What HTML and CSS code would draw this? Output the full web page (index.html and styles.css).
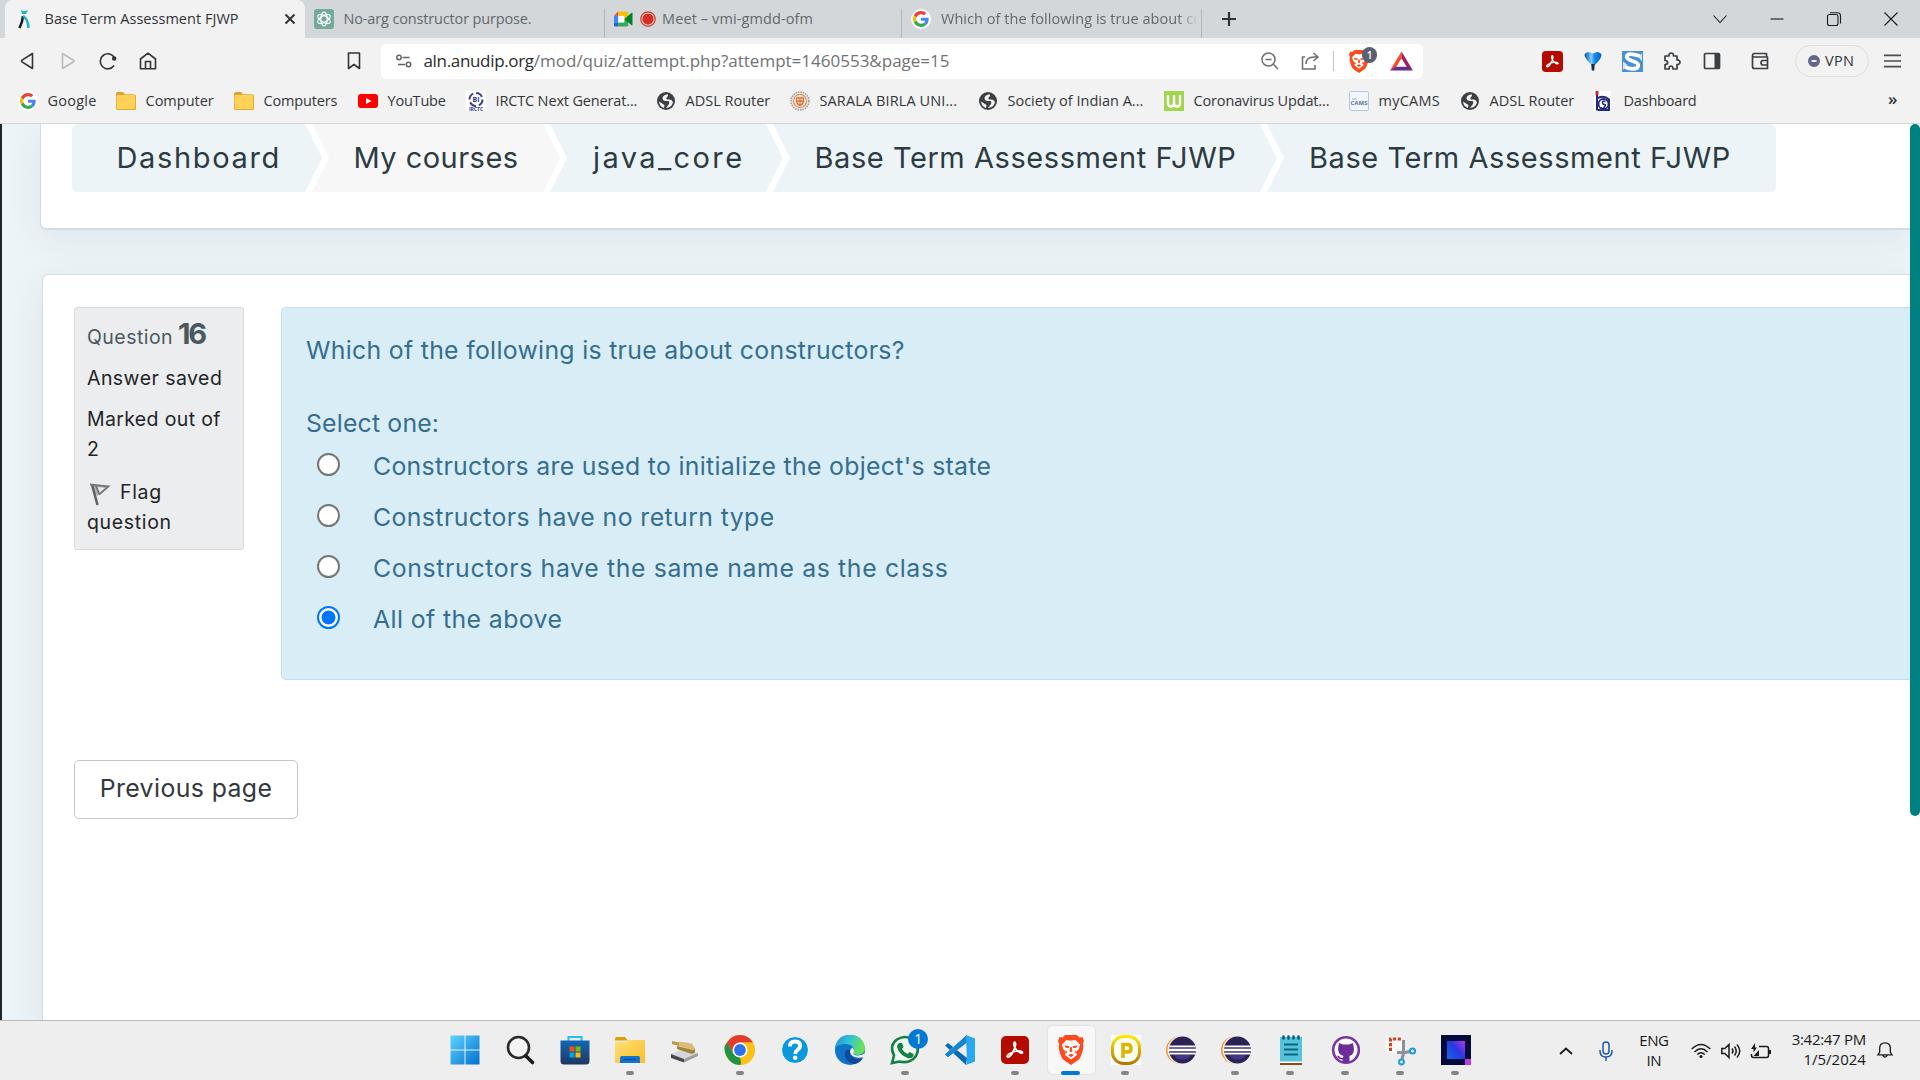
FILE: index.html
```html
<!DOCTYPE html>
<html lang="en">
<head>
<meta charset="utf-8">
<title>Base Term Assessment FJWP</title>
<link rel="stylesheet" href="styles.css">
</head>
<body>
<svg class="defs" aria-hidden="true">
  <symbol id="google" viewBox="0 0 48 48">
    <path fill="#ea4335" d="M24 9.5c3.5 0 6.700 1.200 9.200 3.600l6.900-6.900C35.900 2.400 30.500 0 24 0 14.600 0 6.500 5.400 2.600 13.200l8 6.200C12.400 13.700 17.700 9.500 24 9.500z"/>
    <path fill="#4285f4" d="M47 24.600c0-1.600-.2-3.100-.4-4.600H24v9h12.900c-.6 3-2.200 5.500-4.700 7.200l7.700 6C44.400 38 47 31.800 47 24.600z"/>
    <path fill="#fbbc05" d="M10.500 28.600A14.500 14.500 0 0 1 10.500 19.400l-8-6.200a24 24 0 0 0 0 21.600z"/>
    <path fill="#34a853" d="M24 48c6.500 0 12-2.100 15.900-5.800l-7.700-6c-2.200 1.500-4.900 2.300-8.200 2.300-6.300 0-11.600-4.200-13.500-9.900l-8 6.200C6.500 42.600 14.600 48 24 48z"/>
  </symbol>
  <symbol id="folder" viewBox="0 0 20 18">
    <path fill="#d9a32e" d="M0 2Q0 0 2 0h5l2 2.500h8V6H0z"/><rect y="2.500" width="20" height="15.500" rx="1.500" fill="#e0ab33"/><rect x=".7" y="3" width="18.300" height="14" rx="1" fill="#ffd257"/>
  </symbol>
  <symbol id="globe" viewBox="0 0 18 18">
    <circle cx="9" cy="9" r="9" fill="#3c4043"/><path fill="#f2f2f2" d="M9.500 2.500Q6 3 5.500 6q0 3 3.500 3h2.500q1.500 1 .5 3l-3 4q5.500-.5 7-5.500-1-3-3.500-3H10q-1.500-1 0-2.500 1.500-1 1-2.500zM2 9.500q.5 5 5 6.500L7.500 13z"/>
  </symbol>
  <symbol id="lion" viewBox="0 0 26 30">
    <path fill="#fb4b1f" d="M7 0h12l2.500 2.500L24.500 2 26 6l-1 3 .3 4c-1 5-2.300 8.500-4.300 11.500L13 30 5 24.500C3 21.500 1.700 18 .7 13L1 9 0 6l1.500-4 3 .5z"/>
    <path fill="#fff" d="M8.500 5l4.500.8 4.500-.8L22 9.500l-1.200 4.500-2.800 3 1 3-6 4.500L7 20l1-3-2.800-3L4 9.500z"/>
    <path fill="#fb4b1f" d="M6.500 10.300l5 .9-.6 1.800-3.400-.2zM19.500 10.300l-5 .9.6 1.800 3.400-.2zM12.300 12h1.400l.8 4.300-1.500.9-1.500-.9zM10 20l3-1.300 3 1.300-3 2.200zM9.500 17.500l-1.800-2.300.5 3zM16.500 17.500l1.800-2.300-.5 3z"/>
  </symbol>
  <symbol id="acrobat" viewBox="0 0 28 28">
    <rect width="28" height="28" rx="5" fill="#b30b00"/>
    <path d="M6.500 21c-2-1 3-4.500 7-5.500s8.500-.5 8 1.200c-.8 2-6.500-2-8.200-6.200-1.300-3.500.3-5.500 1.200-3.500C15.500 10 10 22 6.500 21z" fill="none" stroke="#fff" stroke-width="1.700"/>
  </symbol>
  <symbol id="eclipse" viewBox="0 0 30 30">
    <circle cx="13.500" cy="15" r="13.500" fill="#f7941e"/><circle cx="15.500" cy="15" r="14" fill="#eee"/><circle cx="16.500" cy="15" r="13.500" fill="#2c2255"/><path fill="#473788" d="M8 20h17q-3 4.500-8.500 4.500T8 20z"/>
    <path stroke="#fff" stroke-width="1.800" d="M3.300 11.300h26.400M3 15h27M3.300 18.700h26.400"/><path stroke="#a89fcf" stroke-width=".8" d="M3 13.200h27M3 16.900h27"/>
  </symbol>
</svg>

<header class="browser">
  <div class="tabs">
    <div class="tab tab-active">
      <svg class="tab-icon" viewBox="0 0 12 18"><path d="M5 6Q4.500 12 1.500 18" fill="none" stroke="#151b20" stroke-width="2.600"/><path d="M5 6q5 3 5.500 12" fill="none" stroke="#22b5bd" stroke-width="2.600"/><path fill="#22b5bd" d="M3 0l3 1.200L10 0 8 4H4z"/></svg>
      <span class="tab-title ls-05">Base Term Assessment FJWP</span>
      <svg class="tab-close" viewBox="0 0 12 12"><path d="M1.500 1.500l9 9m0-9l-9 9" stroke="#303336" stroke-width="2"/></svg>
    </div>
    <div class="tab tab-gpt">
      <svg class="icon-20" viewBox="0 0 20 20"><rect width="20" height="20" rx="3" fill="#74aa9c"/><g fill="none" stroke="#fff" stroke-width="1.100"><ellipse cx="10" cy="10" rx="3.200" ry="7"/><ellipse cx="10" cy="10" rx="3.200" ry="7" transform="rotate(60 10 10)"/><ellipse cx="10" cy="10" rx="3.200" ry="7" transform="rotate(120 10 10)"/></g></svg>
      <span class="tab-title ls-m1">No-arg constructor purpose.</span>
    </div>
    <div class="tab tab-meet">
      <svg class="icon-20" viewBox="0 0 20 16"><path fill="#ea4335" d="M0 4.500L4.500 0v4.500z"/><path fill="#4285f4" d="M0 4.500h4.500V12H0z"/><path fill="#1967d2" d="M0 12h4.500v4H1.500Q0 16 0 14.500z"/><path fill="#fff" d="M4.500 4.500H11v7H4.500z"/><path fill="#fbbc04" d="M4.500 0h9Q15 0 15 1.500V6l-4 2V4.500H4.500z"/><path fill="#34a853" d="M4.500 16h9q1.500 0 1.500-1.500V10l-4-2v4H4.500z"/><path fill="#00832d" d="M11 8l7.500-6.500q1-.5 1 .5v12q0 1-1 .5z"/></svg>
      <svg class="rec" viewBox="0 0 16 16"><circle cx="8" cy="8" r="7.200" fill="none" stroke="#d93025" stroke-width="1.200"/><circle cx="8" cy="8" r="5.600" fill="#d93025"/></svg>
      <span class="tab-title ls-14">Meet – vmi-gmdd-ofm</span>
    </div>
    <div class="tab tab-search">
      <span class="disc"><svg viewBox="0 0 48 48"><use href="#google"/></svg></span>
      <span class="tab-title tab-fade ls-07">Which of the following is true about co</span>
    </div>
    <svg class="new-tab" viewBox="0 0 16 16"><path d="M8 1v14M1 8h14" stroke="#303336" stroke-width="2.200"/></svg>
    <div class="window-controls">
      <svg viewBox="0 0 14 14"><path d="M.5 3.500l6.500 7 6.500-7"/></svg>
      <svg viewBox="0 0 14 14"><path d="M.5 7h13"/></svg>
      <svg viewBox="0 0 14 14"><rect x=".5" y="2.500" width="10.500" height="11" rx="2"/><path d="M3 .8h7.500Q13.500.8 13.500 4v7.500"/></svg>
      <svg viewBox="0 0 14 14"><path d="M.5.5l13 13m0-13l-13 13"/></svg>
    </div>
  </div>

  <div class="toolbar">
    <svg class="line-icon" viewBox="0 0 18 18"><path d="M13.500 1.500v15L3 9.800q-1-.8 0-1.600z"/></svg>
    <svg class="line-icon faded" viewBox="0 0 18 18"><path d="M3.500 1.500v15L14.500 9.800q1-.8 0-1.600z"/></svg>
    <svg class="line-icon" viewBox="0 0 18 18"><path d="M15 13.500A7.500 7.500 0 1 1 15.500 6"/><circle cx="15.200" cy="6.500" r="2.200" class="solid"/></svg>
    <svg class="line-icon" viewBox="0 0 18 18"><path d="M1.500 7L9 1.200 16.500 7v9.800h-15zM6.500 16V9.500h5V16"/></svg>
    <svg class="line-icon" viewBox="0 0 18 18"><path d="M3.500 1h11v15.500L9 12.500l-5.500 4z"/></svg>
    <div class="address">
      <svg class="tune" viewBox="0 0 16 14"><circle cx="3" cy="3.500" r="2.200"/><path d="M6.500 3.500h7M2 10.500h7"/><circle cx="12.500" cy="10.500" r="2.200"/></svg>
      <span class="url"><b>aln.anudip.org</b><span>/mod/quiz/attempt.php?attempt=1460553&amp;page=15</span></span>
      <svg class="grey-icon zoom-icon" viewBox="0 0 18 18"><circle cx="7.500" cy="7.500" r="6.500"/><path d="M4.500 7.500h6M12.300 12.300L17 17"/></svg>
      <svg class="grey-icon share-icon" viewBox="0 0 18 18"><path d="M4 5H1.500v12h12.500v-4M5 12Q5 5 13 5h3M12.500 1l4.500 4-4.500 4"/></svg>
      <i class="sep"></i>
      <span class="shield"><svg viewBox="0 0 26 30"><use href="#lion"/></svg><em>1</em></span>
      <svg class="bat" viewBox="0 0 24 20"><path fill="#ff4724" d="M12 0v7L6 17l-6 3z"/><path fill="#9e1f63" d="M12 0l12 20-6-3-6-10z"/><path fill="#662d91" d="M0 20l6-4h12l6 4z"/></svg>
    </div>
    <svg class="ext ext-pdf" viewBox="0 0 28 28"><use href="#acrobat"/></svg>
    <svg class="ext ext-pin" viewBox="0 0 20 20"><defs><linearGradient id="pin"><stop stop-color="#0a4aa8"/><stop offset=".4" stop-color="#7fd0ff"/><stop offset=".6" stop-color="#1a86e8"/><stop offset="1" stop-color="#0660c8"/></linearGradient></defs><path fill="url(#pin)" d="M1.500 4.500q0-3 4-3.500 2 0 4.500 1.500Q12.500 1 14.500 1q4 .5 4 3.500-1 4-6 9H8Q3 8.500 1.500 4.500z"/><path fill="#1d2c44" d="M8.200 13h3.600l-.6 6.500H8.800z"/></svg>
    <svg class="ext ext-s" viewBox="0 0 20 20"><rect width="20" height="20" fill="#4a8fce"/><path d="M1 10l4 3-4 5zM19 2v8l-3-4z" fill="#dcebf8"/><path d="M17 4.800Q5 .8 4.500 5.500c0 4.500 11 3.500 11 8 0 4.500-8 4-12.500 1.700" fill="none" stroke="#fff" stroke-width="3.600"/></svg>
    <svg class="ext ext-line ext-puzzle" viewBox="0 0 18 18"><path d="M2 4h4c-.8-4 5.200-4 4.500 0H14v4c4-.5 4 5 0 4.500v4.500h-4c0-4-4-4-4 0H2v-4.500c3.500 0 3.500-4 0-4z"/></svg>
    <svg class="ext ext-line ext-side" viewBox="0 0 18 18"><rect x="1.500" y="1.500" width="15" height="15" rx="1"/><path class="solid" d="M11.500 2H16v14h-4.500z"/></svg>
    <svg class="ext ext-line ext-wallet" viewBox="0 0 18 18"><path d="M1.500 4v10.500q0 2 2 2h13V5H3Q1.500 5 1.500 3.500T3 1.500h12.500V5M16.500 8.500H11q-2 2.200 0 4.500h5.500"/></svg>
    <div class="vpn"><i></i><span>VPN</span></div>
    <svg class="menu" viewBox="0 0 18 14"><path d="M0 1h18M0 7h18M0 13h18"/></svg>
  </div>

  <nav class="bookmarks">
    <a><span class="disc"><svg viewBox="0 0 48 48"><use href="#google"/></svg></span><span class="ls-3">Google</span></a>
    <a><svg class="bm-icon" viewBox="0 0 20 18"><use href="#folder"/></svg><span>Computer</span></a>
    <a><svg class="bm-icon" viewBox="0 0 20 18"><use href="#folder"/></svg><span class="ls-m1">Computers</span></a>
    <a><svg class="bm-icon" viewBox="0 0 20 20"><rect y="3" width="20" height="14" rx="3" fill="#f00"/><path fill="#fff" d="M8 7l5.500 3L8 13z"/></svg><span class="ls-m2">YouTube</span></a>
    <a><svg class="bm-icon" viewBox="0 0 20 20"><rect width="20" height="20" fill="#fff"/><circle cx="10" cy="8.500" r="6.500" fill="none" stroke="#3a3f94" stroke-width="2" stroke-dasharray="7 3"/><text x="10" y="11" class="logo-bi">BI</text><text x="10" y="19.800" class="logo-irctc">IRCTC</text></svg><span class="ls-m1">IRCTC Next Generat...</span></a>
    <a><svg class="bm-icon" viewBox="0 0 20 20"><use href="#globe" x="1" y="1" width="18" height="18"/></svg><span>ADSL Router</span></a>
    <a><svg class="bm-icon" viewBox="0 0 20 20"><circle cx="10" cy="10" r="9" fill="#f4e7dc" stroke="#8f9bb0" stroke-width="1.600" stroke-dasharray="1.500 1"/><circle cx="10" cy="10" r="6.600" fill="none" stroke="#e2905c" stroke-width="1.200"/><path fill="none" stroke="#d9733a" stroke-width="1.300" d="M6.500 7h7v3q0 3-3.500 4.500Q6.500 13 6.500 10zM10 7v7M7 10h6"/></svg><span class="ls-14">SARALA BIRLA UNI...</span></a>
    <a><svg class="bm-icon" viewBox="0 0 20 20"><use href="#globe" x="1" y="1" width="18" height="18"/></svg><span>Society of Indian A...</span></a>
    <a><svg class="bm-icon" viewBox="0 0 20 20"><rect width="20" height="20" fill="#a0d64b"/><path d="M4 4v8q0 3.500 3 3.500t3-3.500V4v8q0 3.500 3 3.500t3-3.500V4" fill="none" stroke="#fff" stroke-width="2.400"/></svg><span class="ls-m1">Coronavirus Updat...</span></a>
    <a><svg class="bm-icon" viewBox="0 0 20 20"><rect x=".5" y=".5" width="19" height="19" rx="1.500" fill="#f3f7fc" stroke="#b4c8e4"/><path d="M3 8h5" stroke="#9aa9c0"/><text x="10" y="13.500" class="logo-cams">CAMS</text></svg><span class="ls-3">myCAMS</span></a>
    <a><svg class="bm-icon" viewBox="0 0 20 20"><use href="#globe" x="1" y="1" width="18" height="18"/></svg><span>ADSL Router</span></a>
    <a><svg class="bm-icon" viewBox="0 0 20 20"><path fill="#fff" d="M0 0h17v20H0z"/><path fill="#e02020" d="M1.500 0h3v4h-3z"/><path fill="none" stroke="#27277a" stroke-width="2" d="M3 4v15.500M4 7q6-3 11 1.500V19H4"/><circle cx="9.500" cy="13" r="5" fill="none" stroke="#27277a" stroke-width="1.800"/><path fill="none" stroke="#27277a" stroke-width="1.500" d="M11.500 10.500q-3-1-3 1t2 2-.5 3-3-.500"/></svg><span class="ls-m2">Dashboard</span></a>
    <span class="more">»</span>
  </nav>
</header>

<main class="page">
  <div class="content">
    <section class="card card-top">
      <nav class="crumbs">
        <a class="c1">Dashboard</a><a class="c2">My courses</a><a class="c3">java_core</a><a class="c4">Base Term Assessment FJWP</a><a class="c5">Base Term Assessment FJWP</a>
      </nav>
    </section>
    <section class="card card-main">
      <div class="question">
        <aside class="info">
          <h3>Question <b>16</b></h3>
          <p>Answer saved</p>
          <p class="marked">Marked out of<br>2</p>
          <p class="flag"><svg viewBox="0 0 22 24"><path fill="#b3b5b6" d="M1 1l4 .500L20 3l-8 8-4 2z"/><path fill="#ededee" d="M9 4l7 1-5 5z"/><path fill="none" stroke="#606364" stroke-width="2.600" d="M3 1.500l5.500 20.500"/><path fill="none" stroke="#77797b" stroke-width="1.800" d="M1 1.500l18.500 2L10 11.500M7 3l3 8"/></svg>Flag<br>question</p>
        </aside>
        <div class="formulation">
          <p class="qtext">Which of the following is true about constructors?</p>
          <p class="prompt">Select one:</p>
          <div class="option"><i class="radio"></i><span class="o1">Constructors are used to initialize the object's state</span></div>
          <div class="option"><i class="radio"></i><span class="o2">Constructors have no return type</span></div>
          <div class="option"><i class="radio"></i><span class="o3">Constructors have the same name as the class</span></div>
          <div class="option"><i class="radio radio-on"></i><span class="o2">All of the above</span></div>
        </div>
      </div>
      <button class="prev">Previous page</button>
    </section>
  </div>
  <div class="scrollbar"><i></i></div>
</main>

<footer class="taskbar">
  <div class="apps">
    <span class="app"><svg viewBox="0 0 30 30"><defs><linearGradient id="win" x2="1" y2="1"><stop stop-color="#5fd5ff"/><stop offset="1" stop-color="#0070d0"/></linearGradient></defs><path fill="url(#win)" d="M.5.5h14v14H.5zM15.500.5h14v14h-14zM.5 15.500h14v14H.5zM15.500 15.500h14v14h-14z"/></svg></span>
    <span class="app"><svg viewBox="0 0 30 30"><circle cx="13.500" cy="12.500" r="10.500" fill="#f4f4f4" stroke="#2b2b2b" stroke-width="2.600"/><path d="M21 21l6.500 6.500" stroke="#1d1d1d" stroke-width="3.600" stroke-linecap="round"/></svg></span>
    <span class="app"><svg viewBox="0 0 30 30"><defs><linearGradient id="store" x2="0" y2="1"><stop stop-color="#1169b8"/><stop offset="1" stop-color="#1f355f"/></linearGradient></defs><path d="M8.500 6V2h13v4" fill="none" stroke="#27bdf5" stroke-width="2"/><path fill="url(#store)" d="M.5 5.500h29V26q0 3.500-3.500 3.500H4Q.5 29.500.5 26z"/><path fill="#f25022" d="M9.500 11.500h5v5h-5z"/><path fill="#7fba00" d="M15.500 11.500h5v5h-5z"/><path fill="#00a4ef" d="M9.500 17.500h5v5h-5z"/><path fill="#ffb900" d="M15.500 17.500h5v5h-5z"/></svg></span>
    <span class="app run"><svg viewBox="0 0 30 30"><defs><linearGradient id="files" x2="1" y2="1"><stop stop-color="#ffe07a"/><stop offset="1" stop-color="#fdbd25"/></linearGradient></defs><path fill="#dd9d0b" d="M0 4q0-2 2-2h8l3 3.500H0z"/><path fill="url(#files)" d="M0 7h11l3-2h16v23H0z"/><path fill="#1373cd" d="M5 28v-5q0-2 2-2h16q2 0 2 2v5z"/><path stroke="#0a4c94" stroke-width="1.400" d="M9 24.500h12"/></svg></span>
    <span class="app"><svg viewBox="0 0 30 30"><path fill="#d4d6d9" d="M1 19l12-5 15 4-14 6z"/><path fill="#484a4e" d="M1 19l13 5v3.500L1 23z"/><path fill="#9b9da1" d="M14 24l14-6v3l-14 6.500z"/><path fill="#d8bd78" d="M9 6.500l13 2 3 5-2 1.500L9 11z"/><path fill="#a48337" d="M7 11l16 4 2-1.500v4L22 19 7 14z"/><path fill="#b99848" d="M2 6l7 1.500v3.500L2 9z"/></svg></span>
    <span class="app run"><svg viewBox="0 0 30 30"><circle cx="15" cy="15" r="15" fill="#fbc116"/><path fill="#e33b2e" d="M2 7.500Q6.500 0 15 0t13 7.500H15L8.500 19z"/><path fill="#229342" d="M2 7.500L8.500 19 15 22l1.500 8H15Q6 30 1.500 21T2 7.500z"/><path fill="#fbc116" d="M21.500 18.500L15 30q9 0 13-8t0-14.500H15z"/><circle cx="15" cy="15" r="7.500" fill="#fff"/><circle cx="15" cy="15" r="5.900" fill="#2d72e8"/></svg></span>
    <span class="app"><svg viewBox="0 0 30 30"><circle cx="15" cy="15" r="13.500" fill="#0a97dc" stroke="#fff"/><path fill="none" stroke="#fff" stroke-width="3.800" d="M9.800 11.500q0-5 5.200-5t5.200 4.500c0 3.500-5 3.500-5 8"/><circle cx="15.200" cy="22.800" r="2.300" fill="#fff"/></svg></span>
    <span class="app"><svg viewBox="0 0 30 30"><defs><linearGradient id="edge" x2="1" y2=".3"><stop stop-color="#1b8fd6"/><stop offset=".5" stop-color="#32c3d9"/><stop offset="1" stop-color="#6be254"/></linearGradient></defs><circle cx="15" cy="15" r="15" fill="#1172cb"/><path fill="url(#edge)" d="M0 13Q2 0 15 0t15 13q0 7-8 7-5 0-3-4 0-7-9-7-6 0-10 4z"/><path fill="#10489a" d="M10 17q-1 9 8 12 6 0 10-6-4 2.500-9 0-5-3-4-8-4-1-5 2z"/><path fill="#eee" d="M17.500 12.500q-4 3-1.500 7 5 5 13 2.500l1-4q-3 2.500-8 2.500t-3-4q0-2-1.500-4z"/></svg></span>
    <span class="app run"><svg viewBox="0 0 30 30"><path d="M2 28l2-7.500Q-1 10 7 4.500 15-.5 23 4.500 31 11.500 26 21q-6 8-16.500 5.500z" fill="#f0f6f2" stroke="#158043" stroke-width="2.600"/><path fill="#158043" d="M9 8l3 0 1.500 4-1.500 2q2 3.500 5.500 5l2-2 4 2v2q-2 3-6 2-8-3-10.500-11Q7 9.500 9 8z"/></svg><em>1</em></span>
    <span class="app"><svg viewBox="0 0 30 30"><path fill="#0b6ab0" d="M0 10.500l3-2.500 19 15-1 7zM0 19.500L3 22 22 7V0z"/><path fill="#1287d2" d="M0 19.500L3 22 22 7.500V0L10 11z"/><path fill="#28a8f0" d="M21 0l9 3.500v23L21 30l1-2z"/></svg></span>
    <span class="app run"><svg viewBox="0 0 30 30"><use href="#acrobat" x="1" y="1" width="28" height="28"/></svg></span>
    <span class="app active"><svg viewBox="0 0 26 30"><use href="#lion"/></svg></span>
    <span class="app run"><svg viewBox="0 0 30 30"><defs><linearGradient id="pad" x2="0" y2="1"><stop stop-color="#ffe600"/><stop offset="1" stop-color="#b27a00"/></linearGradient></defs><rect width="30" height="30" fill="#fff"/><rect x="1.500" y="1.500" width="27" height="27" rx="11" fill="#fffef2" stroke="url(#pad)" stroke-width="3"/><path d="M12 23V9.500h4.500q3.500 0 3.500 3.700t-3.500 3.700H12" fill="none" stroke="#dcb604" stroke-width="3.600"/></svg></span>
    <span class="app"><svg viewBox="0 0 30 30"><use href="#eclipse"/></svg></span>
    <span class="app run"><svg viewBox="0 0 30 30"><use href="#eclipse"/></svg></span>
    <span class="app run"><svg viewBox="0 0 30 30"><path fill="#56c3dc" d="M4 2h22v25H4z"/><path fill="#8a4a10" d="M4 27.500h22V30H4z"/><path fill="#fff" d="M4 26.500h22v1.500H4z"/><path stroke="#0f6480" stroke-width="2" d="M8 9.500h14M8 14.500h14M8 19.500h14"/><path stroke="#0b5d78" stroke-width="2.500" stroke-linecap="round" d="M7.500 1.500v2M12.500 1.500v2M17.500 1.500v2M22.500 1.500v2"/></svg></span>
    <span class="app run"><svg viewBox="0 0 30 30"><circle cx="15" cy="15" r="12.800" fill="#fff" stroke="#7a35a5" stroke-width="2.600"/><path fill="#6c2d99" d="M8 8l4 1.500h6L22 8l.8 4.500Q24 19 18.500 21v6.500h-7v-3Q7 24.500 6 20.500q2 0 3 1.500t3 .5l.5-1.500Q6 19 7.200 12.500z"/></svg></span>
    <span class="app run"><svg viewBox="0 0 30 30"><path fill="#f8f8f8" d="M0 1h17v17H0z"/><path fill="none" stroke="#d2421c" stroke-width="3" stroke-dasharray="3.200 1.600" d="M4.500 16V4H16"/><path fill="none" stroke="#8b9199" stroke-width="3" d="M17.500 5v13.500L16 24M11 17.500h8l5-1"/><circle cx="26.500" cy="16" r="2.600" fill="none" stroke="#1f9be0" stroke-width="2"/><circle cx="15.500" cy="27" r="2.400" fill="none" stroke="#1f9be0" stroke-width="2"/></svg></span>
    <span class="app run"><svg viewBox="0 0 30 30"><defs><linearGradient id="cube" x1="1" x2="0" y2=".8"><stop stop-color="#c030e8"/><stop offset=".5" stop-color="#2838e0"/><stop offset="1" stop-color="#1560e8"/></linearGradient></defs><rect width="30" height="30" fill="#040b3c"/><path fill="url(#cube)" d="M6 6h18v18H6z"/><path fill="#c037e6" d="M24 24h6v6h-6z"/></svg></span>
  </div>
  <div class="tray">
    <svg class="caret" viewBox="0 0 14 8"><path d="M1 7l6-5.500L13 7"/></svg>
    <svg class="mic" viewBox="0 0 14 20"><rect x="4" y="1" width="6" height="12" rx="3"/><path d="M1 9v1q0 6 6 6t6-6V9M7 16v4"/></svg>
    <div class="lang"><span>ENG</span><span>IN</span></div>
    <svg class="wifi" viewBox="0 0 20 16"><path d="M.7 6q9.300-9 18.600 0M3.500 9q6.500-6.500 13 0M6.200 11.500q3.800-3.500 7.600 0"/><circle cx="10" cy="13.500" r="1.600" class="solid"/></svg>
    <svg class="sound" viewBox="0 0 20 16"><path d="M.8 5.500h3L8 1.500v13L3.800 10.500h-3zM11 5.500q2 2.500 0 5M13.500 3.500q3.500 4.500 0 9M16 1.500q5.500 6.500 0 13"/></svg>
    <svg class="battery" viewBox="0 0 20 16"><path d="M8 3.500h7.500q2 0 2 2v7q0 2-2 2h-13q-2 0-2-2V11"/><path class="solid" d="M18 7h2v4h-2zM4 0L0 6h2.500v3.500L6 4.500H4zM2.500 13L8 7v6z"/></svg>
    <div class="clock"><span>3:42:47 PM</span><span>1/5/2024</span></div>
    <svg class="bell" viewBox="0 0 18 20"><path d="M1 15l2-3V7.500q0-6 6-6t6 6V12l2 3zM6.500 15.500q2.500 4 5 0"/></svg>
  </div>
</footer>
</body>
</html>
```
FILE: styles.css
```css
* { box-sizing: border-box; }
body { margin: 0; width: 1920px; height: 1080px; overflow: hidden; display: flex; flex-direction: column; font-family: Inter, sans-serif; background: #fff; }
p, h3 { margin: 0; font-weight: 400; }
svg { display: block; flex: none; overflow: visible; }
.defs { display: none; }

/* Browser chrome */
.browser { height: 124px; flex: none; background: #f2f2f2; border-bottom: 1px solid #d0d6d9; font: 14.5px/20px "Open Sans", sans-serif; color: #33373a; white-space: nowrap; }
.ls-05 { letter-spacing: .03px; }
.ls-07 { letter-spacing: .04px; }
.ls-14 { letter-spacing: .11px; }
.ls-3 { letter-spacing: .25px; }
.ls-m1 { letter-spacing: -.15px; }
.ls-m2 { letter-spacing: -.2px; }

.tabs { display: flex; align-items: center; height: 38px; background: #d3d7da; padding-left: 5px; }
.tab { display: flex; align-items: center; height: 38px; color: #62686c; }
.tab-active { width: 300px; background: #f2f2f2; border-radius: 8px 8px 0 0; padding: 0 9px 0 13px; color: #303336; }
.tab-icon { width: 12px; height: 18px; margin-right: 14.5px; }
.tab-close { width: 12px; height: 12px; margin-left: auto; }
.icon-20 { width: 20px; height: 20px; }
.tab-gpt { width: 299px; padding-left: 9px; gap: 9.5px; }
.tab-meet, .tab-search { border-left: 1px solid #b0b6bb; height: 29px; align-self: flex-end; padding-bottom: 9px; }
.tab-meet { width: 297px; padding-left: 9px; }
.tab-meet .icon-20 { height: 16px; width: 19px; }
.rec { width: 16px; height: 16px; margin: 0 6.5px 0 6.5px; }
.tab-search { width: 301px; padding-left: 9px; gap: 10px; border-right: 1px solid #b0b6bb; }
.tab-fade { width: 262px; overflow: hidden; -webkit-mask-image: linear-gradient(90deg, #000 91%, transparent 99%); mask-image: linear-gradient(90deg, #000 91%, transparent 99%); }
.disc { width: 20px; height: 20px; border-radius: 50%; background: #fff; display: grid; place-items: center; flex: none; }
.disc svg { width: 16px; height: 16px; }
.new-tab { width: 16px; height: 16px; margin-left: 19px; }
.window-controls { display: flex; gap: 43px; margin-left: auto; padding-right: 22px; }
.window-controls svg { width: 14px; height: 14px; fill: none; stroke: #1b1b1b; stroke-width: 1.1; }

.toolbar { display: flex; align-items: center; height: 46px; padding-left: 19px; }
.line-icon { width: 18px; height: 18px; margin-right: 22px; fill: none; stroke: #303438; stroke-width: 1.6; stroke-linejoin: round; }
.line-icon .solid { fill: #303438; stroke: none; }
.line-icon:nth-child(4) { margin-right: 188px; }
.line-icon:nth-child(5) { margin-right: 18px; }
.faded { stroke: #b9bcbe; }
.address { display: flex; align-items: center; width: 1042px; height: 35px; background: #fff; border-radius: 5px; padding-left: 15px; }
.tune { width: 16px; height: 14px; margin-right: 11.5px; fill: none; stroke: #5f6368; stroke-width: 1.5; }
.url { width: 837.5px; font-size: 17px; color: #6f7275; }
.url b { font-weight: 400; color: #2a2c2e; letter-spacing: -.33px; }
.grey-icon { width: 18px; height: 18px; fill: none; stroke: #6c6f72; stroke-width: 1.5; }
.share-icon { margin-left: 22px; }
.sep { width: 1px; height: 20px; background: #c2c4c6; margin: 0 15px 0 14px; }
.shield { position: relative; width: 19px; }
.shield svg { width: 20px; height: 23px; }
.shield em { position: absolute; left: 13px; top: -3px; width: 15px; height: 16px; border-radius: 8px; background: #5b6070; color: #fff; font: 600 10px/16px "Open Sans", sans-serif; text-align: center; }
.bat { width: 23px; height: 20px; margin-left: 22px; }
.ext { width: 18px; height: 18px; }
.ext-pdf { width: 21px; height: 21px; margin-left: 119px; }
.ext-pin { width: 20px; height: 20px; margin-left: 19.5px; }
.ext-s { width: 21px; height: 21px; margin-left: 19.5px; }
.ext-puzzle { margin-left: 20px; }
.ext-side { margin-left: 22px; }
.ext-wallet { margin-left: 30px; }
.ext-line { fill: none; stroke: #3b3f43; stroke-width: 1.7; stroke-linejoin: round; }
.ext-line .solid { fill: #3b3f43; stroke: none; }
.vpn { display: flex; align-items: center; gap: 5px; width: 74px; height: 32px; border: 1px solid #dcdee0; border-radius: 16px; margin-left: 26px; padding-left: 12px; letter-spacing: .3px; }
.vpn i { width: 12px; height: 12px; border-radius: 50%; border: 5px solid #62668a; border-width: 5px 3px; background: #fff; }
.menu { width: 17px; height: 14px; margin-left: 15px; stroke: #4a4d50; stroke-width: 1.7; }

.bookmarks { display: grid; align-items: center; height: 33px; padding-left: 18px; grid-template-columns: 98px 118px 124px 108px 190px 134px 188px 186px 185px 111px 134px 294px auto; }
.bookmarks a { display: flex; align-items: center; gap: 9.5px; }
.bm-icon { width: 20px; height: 20px; }
.more { font-size: 17px; line-height: 17px; padding-bottom: 4px; font-weight: 600; }
.logo-bi, .logo-irctc, .logo-cams { font-family: "Open Sans", sans-serif; font-weight: 700; text-anchor: middle; fill: #2e3490; }
.logo-bi { font-size: 7px; }
.logo-irctc { font-size: 5px; }
.logo-cams { font-size: 6px; fill: #5872a8; }

/* Page */
.page { display: flex; height: 896px; flex: none; overflow: hidden; border-left: 2px solid #20262f; background: #ecf4f8; }
.content { width: 1908px; padding-left: 38px; overflow: hidden; }
.card { background: #fff; border: 1px solid #d5dcdf; border-right: 0; box-shadow: 0 8px 36px rgba(60, 60, 80, .075); }
.card-top { height: 106px; border-top: 0; border-bottom-width: 2px; border-radius: 0 0 0 6px; padding-left: 31px; }
.crumbs { display: flex; height: 68px; font-size: 29px; line-height: 68px; color: #2c3b42; white-space: nowrap; }
.crumbs a { flex: none; background: #ecf4f8; margin-left: -10px; clip-path: polygon(0 0, calc(100% - 17px) 0, 100% 50%, calc(100% - 17px) 100%, 0 100%, 17px 50%); }
.crumbs .c1 { width: 250px; margin-left: 0; padding-left: 44.5px; letter-spacing: 1.66px; border-radius: 6px 0 0 6px; clip-path: polygon(0 0, calc(100% - 17px) 0, 100% 50%, calc(100% - 17px) 100%, 0 100%); }
.crumbs .c2 { width: 248px; padding-left: 41.500px; letter-spacing: .47px; background: #f7f7f7; }
.crumbs .c3 { width: 233px; padding-left: 43px; letter-spacing: 2.4px; }
.crumbs .c4 { width: 504px; padding-left: 41.5px; letter-spacing: .56px; }
.crumbs .c5 { width: 509px; padding-left: 42px; letter-spacing: .56px; border-radius: 0 6px 6px 0; clip-path: polygon(0 0, 100% 0, 100% 100%, 0 100%, 17px 50%); }
.card-main { margin: 44px 0 0 2px; height: 800px; border-radius: 6px 0 0 0; padding: 32px 0 0 31px; }
.question { display: flex; gap: 37px; align-items: flex-start; }
.info { width: 170px; height: 243px; flex: none; padding: 11px 0 0 12px; background: #ecedef; border: 1px solid #d6dbdf; border-radius: 3px; font-size: 19.5px; line-height: 30px; color: #1f2427; letter-spacing: .45px; }
.info h3 { display: flex; align-items: baseline; height: 44px; font-size: 19.5px; gap: 5px; color: #4a5960; }
.info h3 b { font-size: 29px; line-height: 30px; letter-spacing: -2.3px; }
.marked { margin-top: 11px; letter-spacing: .35px; }
.flag { margin-top: 13px; letter-spacing: .65px; }
.flag svg { display: inline-block; width: 22px; height: 24px; margin: 0 9px -8px 2px; }
.formulation { flex: 1; height: 373px; padding: 24px 0 0 24px; background: #d9edf6; border: 1px solid #bcdff1; border-right: 0; border-radius: 5px 0 0 5px; color: #356e8f; font-size: 24.8px; line-height: 36px; white-space: nowrap; }
.qtext { letter-spacing: .31px; }
.prompt { margin: 37px 0 0; letter-spacing: .18px; }
.option { display: flex; align-items: center; height: 51px; padding-bottom: 1px; }
.radio { width: 23px; height: 23px; margin: 0 33px 4px 11px; border: 2px solid #767676; border-radius: 50%; background: #fff; flex: none; }
.radio-on { border-color: #0075ff; background: radial-gradient(circle, #0075ff 6.6px, #fff 7.3px); }
.o1 { letter-spacing: .32px; }
.o2 { letter-spacing: .41px; }
.o3 { letter-spacing: .65px; }
.prev { display: block; width: 224px; height: 59px; margin-top: 80px; padding: 0 0 4px; border: 1.5px solid #c6c6c6; border-radius: 5px; background: #fff; font: 24.8px Inter, sans-serif; letter-spacing: .42px; color: #33383b; }
.scrollbar { width: 10px; background: #fff; }
.scrollbar i { display: block; height: 692px; border-radius: 5px; background: #008080; }

/* Taskbar */
.taskbar { display: flex; height: 60px; flex: none; background: #eee; border-top: 1px solid #b9b9b9; padding-left: 437px; font: 15px/20px "Open Sans", sans-serif; color: #1a1a1a; }
.apps { display: flex; }
.app { position: relative; display: grid; place-items: center; width: 55.060px; height: 59px; padding: 0 0 2px 1px; }
.app > svg { width: 30px; height: 30px; }
.app.active > svg { width: 26px; }
.run::after, .active::after { content: ""; position: absolute; bottom: 5px; width: 8px; height: 4px; border-radius: 2px; background: #858585; }
.active::after { width: 19px; background: #0078d4; }
.active::before { content: ""; position: absolute; inset: 5px 3px 6px 5px; border-radius: 5px; background: #f8f8f8; box-shadow: 0 0 1px 1px #e2e2e2; }
.active > svg { position: relative; }
.app em { position: absolute; left: 31px; top: 8px; width: 20px; height: 20px; border-radius: 50%; background: #0078d4; color: #fff; font: 14px/20px "Open Sans", sans-serif; text-align: center; }
.tray { display: flex; align-items: center; margin-left: 76px; }
.tray svg { fill: none; stroke: #1c1c1c; stroke-width: 1.5; }
.tray .solid { fill: #1c1c1c; stroke: none; }
.tray .caret { width: 14px; height: 8px; stroke-width: 1.8; }
.tray .mic { width: 14px; height: 20px; margin-left: 26px; stroke: #1e5aaa; }
.lang { width: 40px; margin-left: 21px; display: flex; flex-direction: column; align-items: center; letter-spacing: -.4px; padding-bottom: 1px; }
.wifi { width: 20px; height: 16px; margin-left: 17px; }
.sound { width: 20px; height: 16px; margin-left: 10px; }
.battery { width: 20px; height: 16px; margin-left: 10px; }
.clock { width: 95px; display: flex; flex-direction: column; align-items: flex-end; padding-bottom: 3px; }
.clock span:first-child { letter-spacing: -.3px; }
.bell { width: 16px; height: 19px; margin-left: 11px; }
```
